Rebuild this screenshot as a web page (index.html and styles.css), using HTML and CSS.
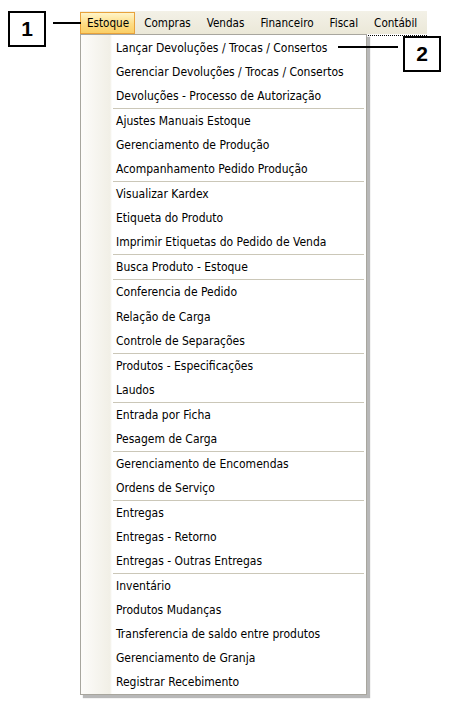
FILE: index.html
```html
<!DOCTYPE html>
<html lang="pt">
<head>
<meta charset="utf-8">
<link rel="stylesheet" href="styles.css">
</head>
<body>
<div class="stage">
  <div class="app">
    <nav class="menubar">
      <span class="top active">Estoque</span>
      <span class="top">Compras</span>
      <span class="top">Vendas</span>
      <span class="top">Financeiro</span>
      <span class="top">Fiscal</span>
      <span class="top">Contábil</span>
    </nav>
    <div class="dropdown">
      <div class="item">Lançar Devoluções / Trocas / Consertos</div>
      <div class="item">Gerenciar Devoluções / Trocas / Consertos</div>
      <div class="item">Devoluções - Processo de Autorização</div>
      <div class="sep"></div>
      <div class="item">Ajustes Manuais Estoque</div>
      <div class="item">Gerenciamento de Produção</div>
      <div class="item">Acompanhamento Pedido Produção</div>
      <div class="sep"></div>
      <div class="item">Visualizar Kardex</div>
      <div class="item">Etiqueta do Produto</div>
      <div class="item">Imprimir Etiquetas do Pedido de Venda</div>
      <div class="sep"></div>
      <div class="item">Busca Produto - Estoque</div>
      <div class="sep"></div>
      <div class="item">Conferencia de Pedido</div>
      <div class="item">Relação de Carga</div>
      <div class="item">Controle de Separações</div>
      <div class="sep"></div>
      <div class="item">Produtos - Especificações</div>
      <div class="item">Laudos</div>
      <div class="sep"></div>
      <div class="item">Entrada por Ficha</div>
      <div class="item">Pesagem de Carga</div>
      <div class="sep"></div>
      <div class="item">Gerenciamento de Encomendas</div>
      <div class="item">Ordens de Serviço</div>
      <div class="sep"></div>
      <div class="item">Entregas</div>
      <div class="item">Entregas - Retorno</div>
      <div class="item">Entregas - Outras Entregas</div>
      <div class="sep"></div>
      <div class="item">Inventário</div>
      <div class="item">Produtos Mudanças</div>
      <div class="item">Transferencia de saldo entre produtos</div>
      <div class="item">Gerenciamento de Granja</div>
      <div class="item">Registrar Recebimento</div>
    </div>
  </div>

  <div class="callout callout-1">1</div>
  <div class="leader leader-1"></div>
  <div class="callout callout-2">2</div>
  <div class="leader leader-2"></div>
  <div class="dots"></div>
</div>
</body>
</html>
```

FILE: styles.css
```css
* { box-sizing: border-box; }
html, body {
  margin: 0;
  padding: 0;
  background: #ffffff;
}
body {
  font-family: "DejaVu Sans Condensed", "DejaVu Sans", "Liberation Sans", sans-serif;
  font-stretch: condensed;
  color: #000;
}
.stage {
  position: relative;
  width: 452px;
  height: 704px;
}
.app {
  padding: 11px 0 0 80px;
  display: flex;
  flex-direction: column;
  align-items: flex-start;
}
.menubar {
  display: flex;
  width: 347px;
  height: 23px;
  background: linear-gradient(#f3f1e7, #ebe8d8);
  font-size: 11.6px;
  align-items: stretch;
  padding-top: 1px;
}
.top {
  display: flex;
  align-items: center;
  padding: 0 6px 0 7px;
  margin-right: 1px;
  border: 1px solid transparent;
}
.top.active {
  border-color: #e8a23b;
  background: linear-gradient(#fff5c9, #fddc84 55%, #fbcf66);
  padding: 0 5px 0 6px;
}
.dropdown {
  width: 287px;
  border: 1px solid #a8a69e;
  background: linear-gradient(to right, #fdfcfa 0, #f1efe6 29px, #fff 31px);
  box-shadow: 3px 3px 1px rgba(0,0,0,0.28);
  padding: 1px 0 0 0;
  display: flex;
  flex-direction: column;
  font-size: 12px;
}
.item {
  height: 24.05px;
  flex: none;
  display: flex;
  align-items: center;
  padding-left: 35px;
  white-space: nowrap;
}
.sep {
  height: 1px;
  flex: none;
  margin: 0 2px 0 32px;
  background: #cbc7b8;
}
.callout {
  position: absolute;
  border: 2px solid #000;
  background: #fff;
  font-family: "Liberation Sans", Arial, sans-serif;
  font-stretch: normal;
  font-weight: bold;
  font-size: 21px;
  display: flex;
  align-items: center;
  justify-content: center;
}
.callout-1 { left: 8px; top: 11px; width: 38px; height: 36px; }
.callout-2 { left: 403px; top: 36px; width: 38px; height: 36px; }
.leader {
  position: absolute;
  height: 2px;
  background: #000;
}
.leader-1 { left: 53px; top: 22px; width: 28px; }
.leader-2 { left: 338px; top: 46px; width: 60px; }
.dots {
  position: absolute;
  left: 368px;
  top: 35px;
  width: 59px;
  border-top: 1px dotted #000;
}
```
